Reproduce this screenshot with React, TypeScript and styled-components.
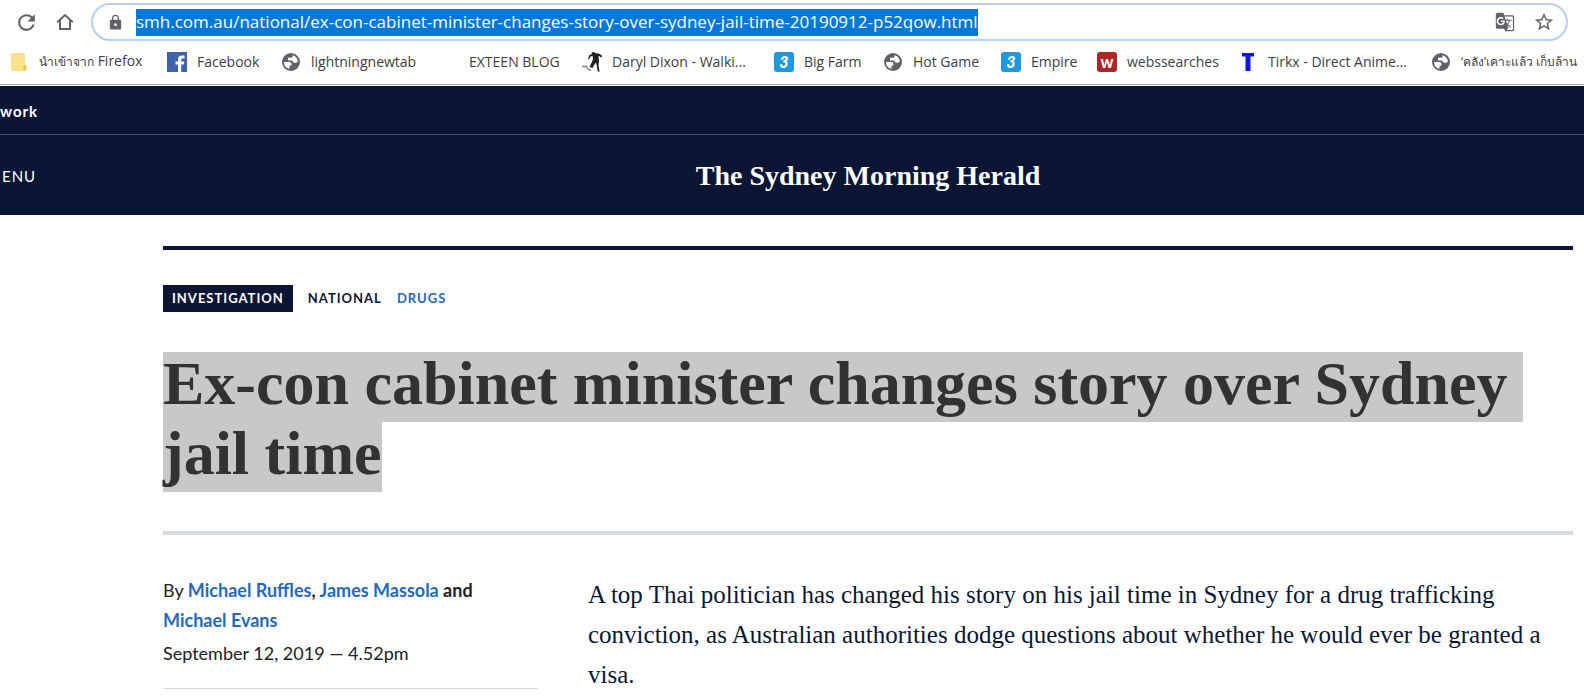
import React from "react";
import styled, { createGlobalStyle } from "styled-components";
import { MdRefresh, MdLock, MdStarBorder, MdGTranslate } from "react-icons/md";

const uiFont = `"Open Sans", "Noto Sans", sans-serif`;
const pageFont = `Lato, "Noto Sans", sans-serif`;
const serifFont = `"Liberation Serif", serif`;
const navy = "#0a1633";
const link = "#1f69bf";

const GlobalStyle = createGlobalStyle`
  * { box-sizing: border-box; }
  body { margin: 0; background: #fff; overflow: hidden; }
  a { color: inherit; text-decoration: none; }
  button { border: 0; padding: 0; background: none; color: inherit; font: inherit; }
`;

const Chrome = styled.div`
  border-bottom: 1px solid #a9acb1;
  margin-bottom: 1px;
  font-family: ${uiFont};
  overflow: hidden;
`;
const Toolbar = styled.div`
  display: flex;
  align-items: center;
  padding: 3px 16px 0 13px;
  color: #5f6368;
`;
const ToolButton = styled.button`
  display: flex;
  align-items: center;
  justify-content: center;
  width: 26px;
  height: 26px;
  margin-right: 13px;
`;
const AddressBar = styled.div`
  flex: 1;
  display: flex;
  align-items: center;
  gap: 12px;
  height: 38px;
  padding: 0 11px 0 14px;
  border: 2px solid #b8cdf3;
  border-radius: 19px;
`;
const Address = styled.input`
  field-sizing: content;
  height: 27px;
  padding: 0 0 2px;
  border: 0;
  outline: 0;
  background: #0078d7;
  color: #fff;
  font-family: ${uiFont};
  font-size: 17px;
  line-height: 25px;
`;
const AddressActions = styled.div`
  display: flex;
  gap: 18px;
  margin-left: auto;
`;
const AddressButton = styled.button`
  display: flex;
  align-items: center;
`;
const Bookmarks = styled.nav`
  display: flex;
  gap: 21px;
  height: 43px;
  padding: 0 0 2px 9px;
  align-items: center;
  color: #3c4043;
  font-size: 14px;
  line-height: 24px;
`;
const Bookmark = styled.a<{ $width: number }>`
  flex: none;
  display: flex;
  align-items: center;
  gap: 10px;
  width: ${(p) => p.$width}px;
  white-space: nowrap;
`;
const Thai = styled.span`
  font-size: 12px;
`;
const IconSlot = styled.span`
  flex: none;
  display: flex;
  align-items: center;
  justify-content: center;
  width: 20px;
  height: 20px;
`;
const Badge = styled(IconSlot)<{ $color: string; $italic?: boolean }>`
  border-radius: 3px;
  background: ${(p) => p.$color};
  color: #fff;
  font: ${(p) => (p.$italic ? "italic" : "normal")} 900 16px/20px ${pageFont};
`;

const Masthead = styled.header`
  background: ${navy};
  color: #fff;
  font-family: ${pageFont};
  font-size: 15px;
  letter-spacing: 1px;
`;
const NetworkBar = styled.div`
  display: flex;
  align-items: center;
  height: 49px;
  padding-top: 2px;
  border-bottom: 1px solid #444e64;
  font-weight: 700;
`;
const BrandBar = styled.div`
  display: grid;
  grid-template-columns: 1fr auto 1fr;
  align-items: center;
  height: 80px;
  padding: 2px 0 0 152px;
`;
const MenuButton = styled.button`
  justify-self: start;
  margin-left: -150px;
  letter-spacing: 1px;
`;
const Brand = styled.a`
  font-family: ${serifFont};
  font-size: 28px;
  font-weight: 700;
  letter-spacing: 0;
  line-height: 40px;
`;

const Article = styled.main`
  margin: 31px 11px 0 163px;
  border-top: 4px solid ${navy};
  color: ${navy};
`;
const Tags = styled.div`
  display: flex;
  align-items: center;
  gap: 15px;
  padding-top: 35px;
  font: 700 13px/27px ${pageFont};
  letter-spacing: 1px;
`;
const Tag = styled.a<{ $kind?: "solid" | "link" }>`
  padding: ${(p) => (p.$kind === "solid" ? "0 9px" : "0")};
  background: ${(p) => (p.$kind === "solid" ? navy : "none")};
  color: ${(p) => (p.$kind === "solid" ? "#fff" : p.$kind === "link" ? link : navy)};
`;
const Headline = styled.h1`
  margin: 40px 0 0;
  padding-bottom: 39px;
  border-bottom: 4px solid #d6dae1;
  color: #323232;
  font: 700 62px/62px ${serifFont};
`;
const HeadlineLine = styled.mark`
  display: block;
  width: fit-content;
  padding-bottom: 8px;
  background: #c8c8c8;
  color: inherit;
  white-space: pre;
`;
const Columns = styled.div`
  display: grid;
  grid-template-columns: 375px 1fr;
  gap: 50px;
  padding-top: 40px;
`;
const Byline = styled.aside`
  align-self: start;
  padding: 0 0 20px;
  border-bottom: 1px solid #d6d8dc;
  color: #222;
  font: 400 18px/30px ${pageFont};
`;
const Authors = styled.p`
  margin: 0 0 3px;
`;
const Author = styled.a`
  color: ${link};
`;
const Story = styled.p`
  margin: 0;
  font: 400 25px/40px ${serifFont};
`;
const Line = styled.span`
  display: block;
  white-space: nowrap;
`;

const HomeIcon = () => (
  <svg width="18" height="18" viewBox="0 0 18 18" fill="none" stroke="currentColor" strokeWidth="2">
    <path d="M1.2 9.2 9 2l7.800 7.200M4 7.500V16h10V7.500" />
  </svg>
);
const GlobeIcon = () => (
  <svg width="18" height="18" viewBox="0 0 18 18">
    <circle cx="9" cy="9" r="9" fill="#5f6368" />
    <path
      d="M2 9h5c1.600 0 2.500.900 2.500 2v1.500H7.500v3.300A7 7 0 0 1 2 9ZM10.500 2.200c3 .6 5 3 5.400 6.300-.8 1.200-2 1.500-3.400 1.300-1.500-.2-2-1.300-2-2.300H6V4.800h3.500c.8 0 1-.6 1-1.200Z"
      fill="#fff"
    />
  </svg>
);
const FolderIcon = () => (
  <svg width="16" height="18" viewBox="0 0 16 18">
    <path d="M1 0h12l1 1v11l2 1v4l-1 1H1l-1-1V1Z" fill="#fbe08a" />
    <path d="M12.500 12h2.500v4.500l-1 1h-2Z" fill="#efc750" />
  </svg>
);
const FacebookIcon = () => (
  <svg width="20" height="20" viewBox="0 0 20 20">
    <path d="M0 0h20v20H0Z" fill="#4062ad" />
    <path d="M11 20v-7.500H8.500V9.500H11V7.500c0-2.700 1.600-4 4-4h2.500v3h-1.700c-1.300 0-1.600.6-1.600 1.600v1.400h3.100l-.4 3h-2.700V20Z" fill="#fff" />
  </svg>
);
const WalkerIcon = () => (
  <svg width="20" height="20" viewBox="0 0 20 20">
    <path
      d="M9.500.500 12 0l1.500 1.200 3 .3 3 1.500.5 2-1 .5-1.500-1.500-1 .5L17 9l-.5 4 .8 5.500.7 1h-2.300l-.9-6-1-3-2 3-1.300 2.500L7.500 15l2-4 1.500-4-.5-3-2 .5L7 7.500 6 7l1.500-4L10 2Z"
      fill="#222"
    />
    <path d="M0 14.500 4.500 14.200 6 17l3 1.500" fill="none" stroke="#8d8d8d" strokeWidth="1.500" />
  </svg>
);
const LetterTIcon = () => (
  <svg width="14" height="18" viewBox="0 0 14 18">
    <path d="M1 0h12v3.500H9.500V18h-5V3.500H1Z" fill="#0d16f0" />
  </svg>
);

const bookmarks: { label: React.ReactNode; width: number; icon: React.ReactNode }[] = [
  { label: <span><Thai lang="th">นำเข้าจาก</Thai> Firefox</span>, width: 137, icon: <IconSlot><FolderIcon /></IconSlot> },
  { label: "Facebook", width: 93, icon: <IconSlot><FacebookIcon /></IconSlot> },
  { label: "lightningnewtab", width: 137, icon: <IconSlot><GlobeIcon /></IconSlot> },
  { label: "EXTEEN BLOG", width: 122, icon: <IconSlot /> },
  { label: "Daryl Dixon - Walki...", width: 171, icon: <IconSlot><WalkerIcon /></IconSlot> },
  { label: "Big Farm", width: 88, icon: <Badge $color="#1e98df" $italic>3</Badge> },
  { label: "Hot Game", width: 97, icon: <IconSlot><GlobeIcon /></IconSlot> },
  { label: "Empire", width: 75, icon: <Badge $color="#1e98df" $italic>3</Badge> },
  { label: "webssearches", width: 120, icon: <Badge $color="#b02626">w</Badge> },
  { label: "Tirkx - Direct Anime...", width: 172, icon: <IconSlot><LetterTIcon /></IconSlot> },
  { label: <Thai lang="th">‘คลัง’เคาะแล้ว เก็บล้าน</Thai>, width: 160, icon: <IconSlot><GlobeIcon /></IconSlot> },
];

export default function App() {
  return (
    <>
      <GlobalStyle />
      <Chrome>
        <Toolbar>
          <ToolButton aria-label="Reload"><MdRefresh size={25} /></ToolButton>
          <ToolButton aria-label="Home"><HomeIcon /></ToolButton>
          <AddressBar>
            <MdLock size={17} />
            <Address
              aria-label="Address"
              spellCheck={false}
              defaultValue="smh.com.au/national/ex-con-cabinet-minister-changes-story-over-sydney-jail-time-20190912-p52qow.html"
            />
            <AddressActions>
              <AddressButton aria-label="Translate"><MdGTranslate size={20} /></AddressButton>
              <AddressButton aria-label="Bookmark this page"><MdStarBorder size={22} /></AddressButton>
            </AddressActions>
          </AddressBar>
        </Toolbar>
        <Bookmarks>
          {bookmarks.map((b, i) => (
            <Bookmark key={i} href="#" $width={b.width}>
              {b.icon}
              {b.label}
            </Bookmark>
          ))}
        </Bookmarks>
      </Chrome>
      <Masthead>
        <NetworkBar><a href="#">work</a></NetworkBar>
        <BrandBar>
          <MenuButton>ENU</MenuButton>
          <Brand href="#">The Sydney Morning Herald</Brand>
        </BrandBar>
      </Masthead>
      <Article>
        <Tags>
          <Tag href="#" $kind="solid">INVESTIGATION</Tag>
          <Tag href="#">NATIONAL</Tag>
          <Tag href="#" $kind="link">DRUGS</Tag>
        </Tags>
        <Headline>
          <HeadlineLine>{"Ex-con cabinet minister changes story over Sydney "}</HeadlineLine>
          <HeadlineLine>jail time</HeadlineLine>
        </Headline>
        <Columns>
          <Byline>
            <Authors>
              <Line>By <b><Author href="#">Michael Ruffles</Author>, <Author href="#">James Massola</Author> and</b></Line>
              <Line><b><Author href="#">Michael Evans</Author></b></Line>
            </Authors>
            <time dateTime="2019-09-12T16:52">September 12, 2019 — 4.52pm</time>
          </Byline>
          <Story>
            <Line>A top Thai politician has changed his story on his jail time in Sydney for a drug trafficking</Line>
            <Line>conviction, as Australian authorities dodge questions about whether he would ever be granted a</Line>
            <Line>visa.</Line>
          </Story>
        </Columns>
      </Article>
    </>
  );
}
